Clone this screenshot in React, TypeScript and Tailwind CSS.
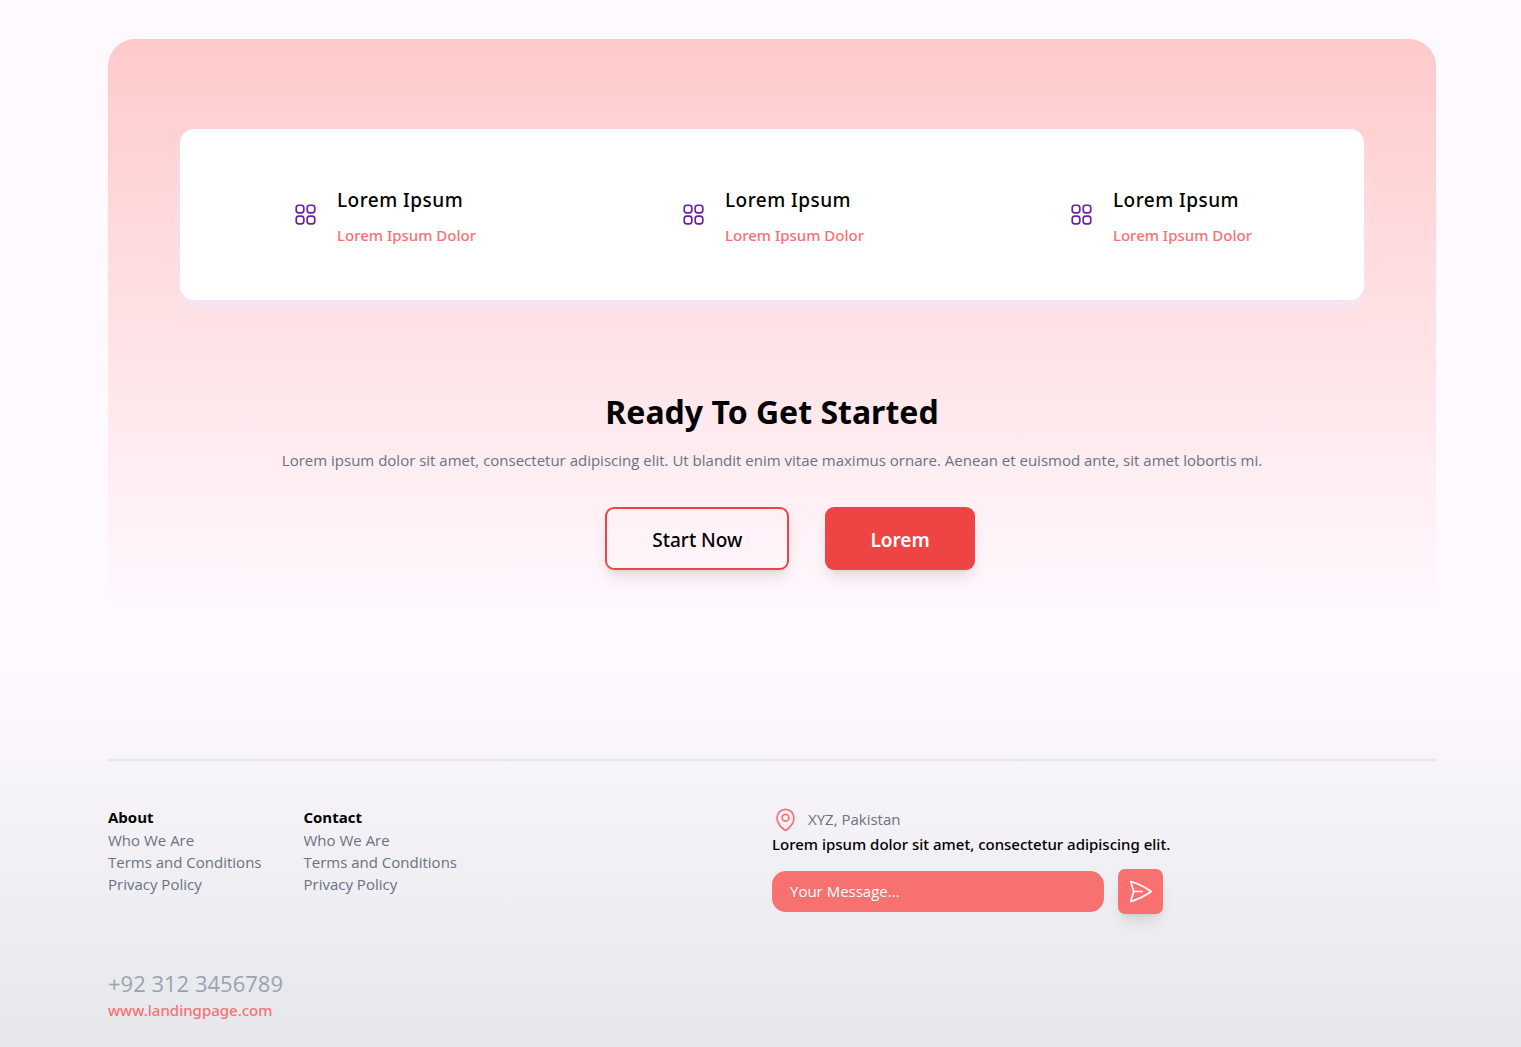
import React from "react";
import { HiOutlineMapPin, HiOutlinePaperAirplane, HiOutlineSquares2X2 } from "react-icons/hi2";

const features = [1, 2, 3];

const linkGroups = [
  { title: "About", links: ["Who We Are", "Terms and Conditions", "Privacy Policy"] },
  { title: "Contact", links: ["Who We Are", "Terms and Conditions", "Privacy Policy"] },
];

function Feature() {
  return (
    <li className="flex items-center gap-[18px] font-['Noto_Sans',sans-serif]">
      <HiOutlineSquares2X2 className="size-[27px] text-[#6b21a8]" aria-hidden="true" />
      <div>
        <h3 className="pt-1 text-[19px] leading-8 font-medium tracking-wide text-black">Lorem Ipsum</h3>
        <p className="mt-[7px] pb-px text-[15px] leading-6 font-medium text-[#f87171]">Lorem Ipsum Dolor</p>
      </div>
    </li>
  );
}

function CallToAction() {
  return (
    <section className="rounded-t-[27px] bg-linear-to-b/srgb from-[#fecaca] to-[#fef9ff] px-[72px] pt-[90px] pb-[45px]">
      <ul className="flex items-center justify-between rounded-[14px] bg-white px-28 pt-[51px] pb-[52px] shadow-lg shadow-[#f3e8ff]/70">
        {features.map((n) => (
          <Feature key={n} />
        ))}
      </ul>
      <div className="mt-[90px] flex flex-col items-center text-center">
        <h2 className="font-['Noto_Sans',sans-serif] text-[32px] leading-[43px] font-bold text-black">
          Ready To Get Started
        </h2>
        <p className="mt-[15px] text-[15px] leading-6 text-gray-500">
          Lorem ipsum dolor sit amet, consectetur adipiscing elit. Ut blandit enim vitae maximus ornare. Aenean et
          euismod ante, sit amet lobortis mi.
        </p>
        <div className="mt-[35px] ml-9 flex gap-9 font-['Noto_Sans',sans-serif]">
          <button
            type="button"
            className="h-[63px] rounded-[9px] border-2 border-[#ef4444] px-[45px] pt-1 text-[19px] font-medium text-black shadow-lg"
          >
            Start Now
          </button>
          <button
            type="button"
            className="h-[63px] rounded-[9px] bg-[#ef4444] px-[45px] pt-1 text-[19px] font-semibold text-white shadow-lg"
          >
            Lorem
          </button>
        </div>
      </div>
    </section>
  );
}

function Footer() {
  return (
    <footer className="mt-[45px] bg-linear-to-b/srgb from-[#fef9ff] to-[#e5e7eb] pt-[99px] pr-[85px] pb-[27px] pl-[108px]">
      <hr className="border-t-2 border-[#e5e7eb]" />
      <div className="mt-[45px] grid grid-cols-2">
        <nav className="flex gap-[42px]">
          {linkGroups.map((group) => (
            <div key={group.title} className="text-[15px] leading-[22px]">
              <h4 className="font-bold text-black">{group.title}</h4>
              <ul className="pt-px text-gray-500">
                {group.links.map((link) => (
                  <li key={link}>
                    <a href="#">{link}</a>
                  </li>
                ))}
              </ul>
            </div>
          ))}
        </nav>
        <div>
          <p className="flex items-center gap-[9px] text-[15px] leading-[27px] text-gray-500">
            <HiOutlineMapPin className="size-[27px] text-[#f87171]" aria-hidden="true" />
            XYZ, Pakistan
          </p>
          <p className="font-['Noto_Sans',sans-serif] text-[15px] leading-[22px] font-medium text-black">
            Lorem ipsum dolor sit amet, consectetur adipiscing elit.
          </p>
          <form className="mt-[14px] flex items-center gap-[14px]">
            <input
              type="text"
              aria-label="Your Message"
              placeholder="Your Message..."
              className="h-[41px] w-1/2 rounded-[14px] bg-[#f87171] px-[18px] pb-0.5 text-[15px] text-white placeholder:text-white"
            />
            <button
              type="button"
              aria-label="Send"
              className="grid size-[45px] place-items-center rounded-[7px] bg-[#f87171] text-white shadow-lg"
            >
              <HiOutlinePaperAirplane className="size-[27px]" aria-hidden="true" />
            </button>
          </form>
        </div>
      </div>
      <address className="mt-[53px] not-italic">
        <p className="text-[22px] leading-8 text-[#9ca3af]">+92 312 3456789</p>
        <a
          href="#"
          className="block font-['Noto_Sans',sans-serif] text-[15px] leading-[22px] font-medium text-[#f87171]"
        >
          www.landingpage.com
        </a>
      </address>
    </footer>
  );
}

export default function App() {
  return (
    <main className="min-h-screen bg-[#fef9ff] pt-[39px] font-['Open_Sans','Noto_Sans',sans-serif]">
      <div className="pr-[85px] pl-[108px]">
        <CallToAction />
      </div>
      <Footer />
    </main>
  );
}
